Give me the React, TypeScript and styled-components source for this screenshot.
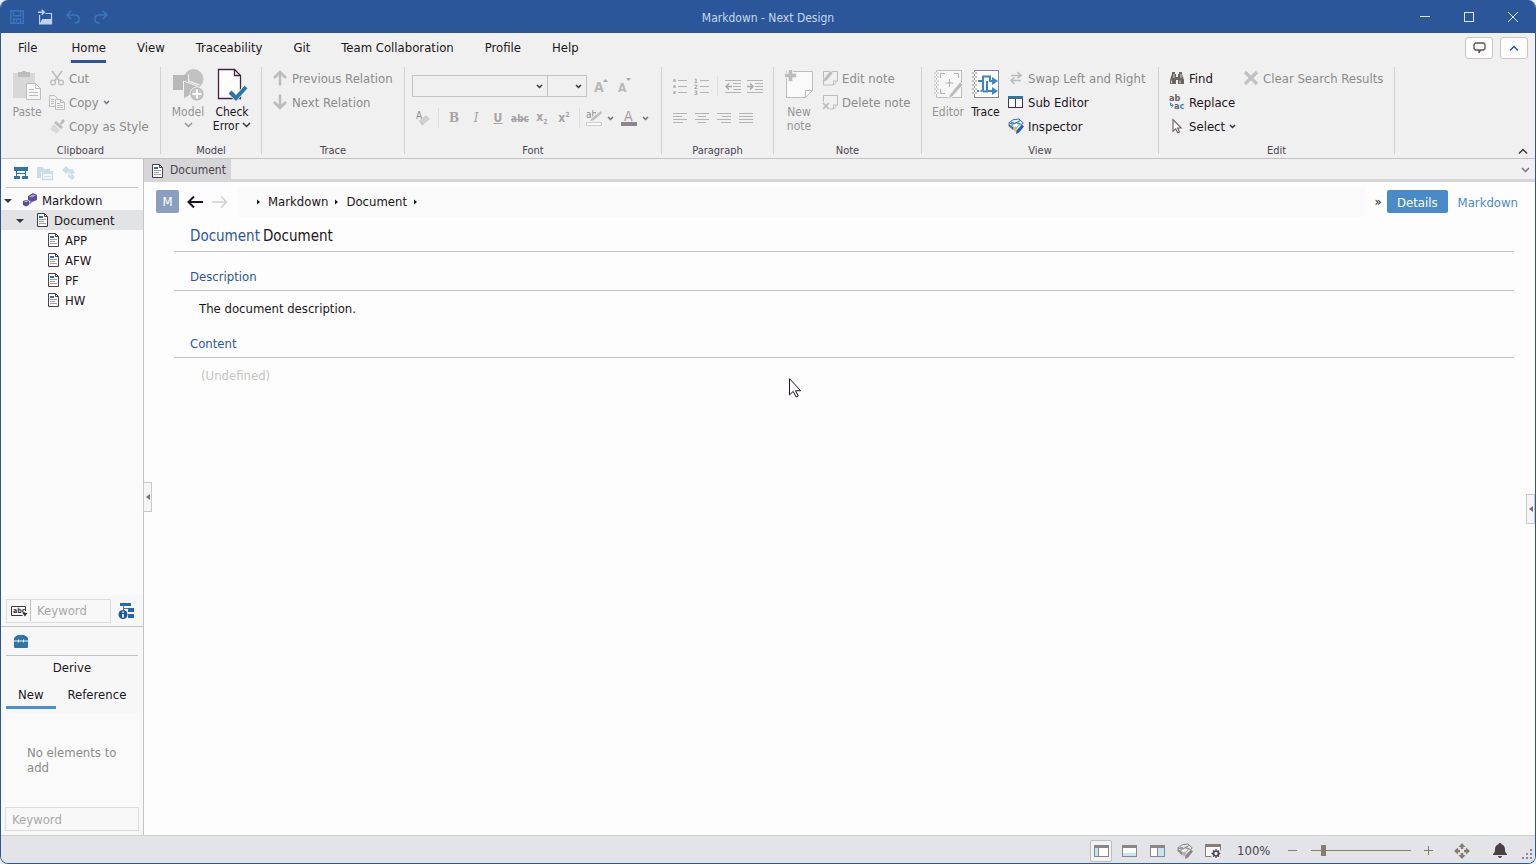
import React from 'react';
import styled, { createGlobalStyle } from 'styled-components';

const GlobalStyle = createGlobalStyle`
  * { box-sizing: border-box; }
  body { margin: 0; background: #eceef0; }
  body, button, input, select {
    font-family: "DejaVu Sans Condensed", "DejaVu Sans", "Noto Sans", sans-serif;
    font-size: 13px;
    line-height: 17px;
    color: #1c1420;
  }
  button { background: none; border: 0; padding: 0; white-space: nowrap; }
  svg { display: block; flex: none; overflow: visible; }
  h1, h2, p, ul { margin: 0; padding: 0; font-weight: 400; }
  ul { list-style: none; }
`;

const GREY = '#bcbcbc';
const BLUE = '#2b579a';
const INK = '#3b3340';

/* ---------- window frame ---------- */

const Window = styled.div`
  display: flex;
  flex-direction: column;
  min-height: 100vh;
  border: 1px solid ${BLUE};
  border-top: 0;
  border-radius: 8px;
  overflow: hidden;
  background: #f0f0f0;
`;

const TitleBar = styled.header`
  display: grid;
  grid-template-columns: 1fr auto 1fr;
  align-items: center;
  height: 33px;
  background: ${BLUE};
`;

const AppTitle = styled.h1`
  font-size: 12px;
  line-height: 16px;
  color: #c9d7ea;
  padding-top: 2px;
`;

const QuickAccess = styled.div`
  display: flex;
  gap: 12px;
  padding-left: 8px;
`;

const WindowButtons = styled.div`
  display: flex;
  justify-content: flex-end;
`;

const CaptionButton = styled.button`
  width: 44px;
  height: 32px;
  display: flex;
  align-items: center;
  justify-content: center;
`;

/* ---------- ribbon ---------- */

const MenuBar = styled.nav`
  display: flex;
  align-items: center;
  height: 30px;
  padding: 0 7px 0 17px;
`;

const MenuTab = styled.button<{ $active?: boolean }>`
  height: 30px;
  padding: 2px 0 0;
  margin-right: 31px;
  border-bottom: 3px solid ${p => (p.$active ? BLUE : 'transparent')};
`;

const FileTab = styled(MenuTab)`
  margin-right: 34px;
`;

const MenuSpacer = styled.div`
  flex: 1;
`;

const CornerButton = styled.button`
  width: 28px;
  height: 22px;
  margin-left: 7px;
  display: flex;
  align-items: center;
  justify-content: center;
  background: #fdfdfd;
  border: 1px solid #c6c6c6;
  border-radius: 3px;
`;

const Ribbon = styled.div`
  display: flex;
  height: 96px;
  padding-top: 3px;
  border-bottom: 1px solid #c3c3c3;
`;

const GroupBox = styled.section<{ $width: number }>`
  display: flex;
  flex-direction: column;
  width: ${p => p.$width}px;
`;

const GroupBody = styled.div<{ $pad: number }>`
  display: flex;
  height: 78px;
  padding-left: ${p => p.$pad}px;
`;

const GroupLabel = styled.h2`
  font-size: 11px;
  line-height: 14px;
  text-align: center;
  color: #4a4350;
`;

const Divider = styled.div`
  width: 1px;
  margin: 1px 0 4px;
  background: #d2d2d2;
`;

const RibbonEnd = styled.div`
  flex: 1;
  display: flex;
  justify-content: flex-end;
  align-items: flex-end;
  padding: 0 7px 3px 0;
`;

const Big = styled.button<{ $width: number }>`
  display: flex;
  flex-direction: column;
  align-items: center;
  width: ${p => p.$width}px;
  padding-top: 3px;
  font-size: 12px;
  line-height: 14px;
  color: #1c1420;
  &:disabled { color: #949494; }
  svg:first-child { margin-bottom: 4px; }
`;

const BigLine = styled.span`
  display: flex;
  align-items: center;
  justify-content: center;
  gap: 3px;
  height: 14px;
`;

const Stack = styled.div<{ $indent?: number }>`
  display: flex;
  flex-direction: column;
  margin-left: ${p => p.$indent ?? 0}px;
`;

const Small = styled.button`
  display: flex;
  align-items: center;
  gap: 4px;
  height: 24px;
  &:disabled { color: #8b8b8b; }
`;

const ToolRow = styled.div`
  display: flex;
  align-items: center;
  height: 22px;
  margin-bottom: 10px;
`;

const FontArea = styled.div`
  padding-top: 9px;
`;

const Tool = styled.button<{ $width?: number }>`
  width: ${p => p.$width ?? 22}px;
  height: 22px;
  display: flex;
  align-items: center;
  justify-content: center;
`;

const ToolPair = styled.div<{ $indent?: number }>`
  display: flex;
  gap: 2px;
  margin-left: ${p => p.$indent ?? 0}px;
`;

const ToolDivider = styled.div`
  width: 1px;
  height: 20px;
  margin: 0 4px;
  background: #dedede;
`;

const SelectBox = styled.label<{ $width: number }>`
  display: grid;
  align-items: center;
  width: ${p => p.$width}px;
  height: 22px;
  border: 1px solid #c3c3c3;
  & + & { border-left-width: 0; }
  select, svg { grid-area: 1 / 1; }
  svg { justify-self: end; margin-right: 4px; pointer-events: none; }
  select { appearance: none; border: 0; width: 100%; height: 20px; background: transparent; }
`;

/* ---------- work area ---------- */

const Work = styled.div`
  flex: 1;
  display: flex;
`;

const Sidebar = styled.aside`
  width: 143px;
  display: flex;
  flex-direction: column;
  background: #fafafa;
  border-right: 1px solid #c3c3c3;
`;

const PaneTools = styled.div`
  display: flex;
  align-items: center;
  gap: 8px;
  height: 29px;
  margin: 0 5px;
  padding-left: 7px;
  border-bottom: 1px solid #c3c3c3;
`;

const Tree = styled.ul`
  flex: 1;
  padding-top: 2px;
`;

const TreeRow = styled.li<{ $level: number; $selected?: boolean }>`
  display: flex;
  align-items: center;
  height: 20px;
  padding-left: ${p => [3, 15, 45][p.$level]}px;
  background: ${p => (p.$selected ? '#e2e3e5' : 'transparent')};
`;

const TreeIcon = styled.span<{ $nested?: boolean }>`
  display: flex;
  justify-content: center;
  width: 14px;
  margin: 0 5px 0 ${p => (p.$nested ? 0 : 10)}px;
`;

const SearchRow = styled.div`
  display: flex;
  align-items: center;
  gap: 7px;
  padding: 0 7px 0 5px;
  height: 32px;
  background: #f7f7f7;
  border-bottom: 1px solid #c3c3c3;
`;

const KeywordBox = styled.label`
  display: flex;
  align-items: center;
  flex: 1;
  min-width: 0;
  height: 24px;
  padding-left: 4px;
  border: 1px solid #dcdcdc;
  background: #f8f8f8;
`;

const KeywordInput = styled.input<{ $ruled?: boolean }>`
  flex: 1;
  min-width: 0;
  height: 21px;
  padding: 0 0 0 ${p => (p.$ruled ? 6 : 2)}px;
  border: 0;
  border-left: ${p => (p.$ruled ? '1px solid #c3c3c3' : '0')};
  background: transparent;
  &::placeholder { color: #a9a9a9; }
`;

const DerivePane = styled.section`
  display: flex;
  flex-direction: column;
  height: 208px;
  background: #f7f7f7;
`;

const DeriveTitle = styled.h2`
  font-size: 13px;
  line-height: 24px;
  text-align: center;
`;

const DeriveTabs = styled.div`
  display: flex;
  padding-left: 5px;
`;

const DeriveTab = styled.button<{ $active?: boolean }>`
  height: 29px;
  padding: 2px 12px 0;
  border-bottom: 3px solid ${p => (p.$active ? '#4a90d0' : 'transparent')};
`;

const DeriveEmpty = styled.p`
  flex: 1;
  display: flex;
  align-items: center;
  margin: 4px 4px 0;
  padding: 0 20px 0 22px;
  line-height: 15px;
  color: #8b8b8b;
  background: #fafafa;
`;

const DeriveSearch = styled.div`
  display: flex;
  padding: 0 4px 4px;
`;

const Main = styled.main`
  flex: 1;
  min-width: 0;
  display: flex;
  flex-direction: column;
  background: #fdfdfd;
`;

const DocTabs = styled.div`
  display: flex;
  align-items: stretch;
  justify-content: space-between;
  height: 23px;
  padding-right: 5px;
  background: #f0f0f0;
  border-bottom: 3px solid #d6d6d6;
`;

const DocTab = styled.button`
  display: flex;
  align-items: center;
  gap: 7px;
  height: 23px;
  padding: 0 5px 0 8px;
  font-size: 12px;
  color: #4a4350;
  background: #d6d6d8;
`;

const DocTabMenu = styled.button`
  display: flex;
  align-items: center;
`;

const PathRow = styled.div`
  display: flex;
  align-items: center;
  height: 40px;
  padding: 0 7px 1px 12px;
`;

const Badge = styled.span`
  width: 23px;
  height: 23px;
  margin-right: 3px;
  border-radius: 2px;
  line-height: 23px;
  text-align: center;
  color: #fff;
  background: #8a9fc0;
`;

const NavButton = styled.button`
  width: 25px;
  height: 24px;
  display: flex;
  align-items: center;
  justify-content: center;
`;

const Breadcrumb = styled.nav`
  flex: 1;
  display: flex;
  align-items: center;
  gap: 7px;
  height: 30px;
  margin-left: 6px;
  padding-left: 19px;
  border-radius: 4px;
  background: #fafafa;
`;

const Crumb = styled.a`
  color: #1c1420;
  text-decoration: none;
`;

const More = styled.button`
  width: 21px;
  height: 24px;
  padding-left: 3px;
`;

const ViewTab = styled.button<{ $active?: boolean }>`
  height: 23px;
  padding: 1px 10px 0;
  border-radius: 2px;
  color: ${p => (p.$active ? '#fff' : '#4a8ac8')};
  background: ${p => (p.$active ? '#4a8ac8' : 'transparent')};
`;

const Form = styled.article`
  padding: 0 21px 0 30px;
`;

const FormTitle = styled.h1`
  display: flex;
  gap: 3px;
  height: 30px;
  padding-left: 16px;
  font-size: 15px;
  line-height: 28px;
  border-bottom: 1px solid #c3c3c3;
`;

const FieldKind = styled.span`
  color: ${BLUE};
`;

const FieldLabel = styled.h2`
  height: 24px;
  padding-left: 16px;
  font-size: 13px;
  line-height: 20px;
  color: ${BLUE};
  border-bottom: 1px solid #c3c3c3;
`;

const Field = styled.section<{ $first?: boolean }>`
  padding-top: ${p => (p.$first ? 15 : 9)}px;
`;

const FieldText = styled.p<{ $muted?: boolean }>`
  height: 34px;
  padding-left: ${p => (p.$muted ? 27 : 25)}px;
  line-height: 36px;
  color: ${p => (p.$muted ? '#c4c4c0' : '#1c1420')};
`;

/* Collapse grips float over the pane borders. */
const Canvas = styled.div`
  position: relative;
  flex: 1;
  display: flex;
  flex-direction: column;
`;

const MainFrame = styled.div`
  position: relative;
  flex: 1;
  min-width: 0;
  display: flex;
`;

const Grip = styled.button<{ $side: 'left' | 'right' }>`
  position: absolute;
  top: calc(50% - 15px);
  ${p => p.$side}: ${p => (p.$side === 'left' ? -1 : 0)}px;
  width: 9px;
  height: 30px;
  display: flex;
  align-items: center;
  justify-content: center;
  background: #f5f5f5;
  border: 1px solid #c9c9c9;
`;

const Pointer = styled.svg`
  position: absolute;
  left: 645px;
  top: 196px;
  pointer-events: none;
`;

const StatusBar = styled.footer`
  display: flex;
  align-items: center;
  justify-content: flex-end;
  height: 28px;
  padding-top: 2px;
  border-top: 1px solid #d0d1d3;
  background: #e2e4e7;
`;

const StatusButton = styled.button<{ $width?: number }>`
  width: ${p => p.$width ?? 28}px;
  height: 24px;
  display: flex;
  align-items: center;
  justify-content: center;
`;

const ActiveFrame = styled.span`
  display: flex;
  align-items: center;
  justify-content: center;
  width: 22px;
  height: 22px;
  border: 1px solid #bdbdbd;
  border-radius: 2px;
  background: #f2f2f2;
`;

const Zoom = styled.output`
  width: 53px;
  padding-left: 10px;
  color: #4a4350;
`;

const ZoomSlider = styled.input`
  appearance: none;
  width: 100px;
  height: 16px;
  margin: 0 6px 0 7px;
  background: linear-gradient(#857c72, #857c72) center / 100% 1px no-repeat;
  &::-webkit-slider-thumb {
    appearance: none;
    width: 5px;
    height: 11px;
    background: #857c72;
  }
`;

const Corner = styled.span`
  display: flex;
  align-self: flex-end;
  padding: 0 3px 4px 6px;
`;

/* ---------- icons ---------- */

type IconProps = { w?: number; h?: number; crisp?: boolean; children: React.ReactNode };
const Icon = ({ w = 16, h = w, crisp, children }: IconProps) => (
  <svg width={w} height={h} viewBox={`0 0 ${w} ${h}`} fill="none" aria-hidden="true"
    shapeRendering={crisp ? 'crispEdges' : 'auto'}>{children}</svg>
);

const Chevron = ({ color = '#3b3340', w = 7, up = false }: { color?: string; w?: number; up?: boolean }) => (
  <Icon w={w} h={7}>
    <path d={up ? `M1 5.5l${w / 2 - 1} ${1 - w / 2} ${w / 2 - 1} ${w / 2 - 1}` : `M1 2l${w / 2 - 1} ${w / 2 - 1} ${w / 2 - 1} ${1 - w / 2}`}
      stroke={color} strokeWidth="1.5" />
  </Icon>
);

const Triangle = ({ right = false }: { right?: boolean }) => right
  ? <Icon w={4} h={8}><path d="M0 1.500L3 4 0 6.500z" fill="#1c1420" /></Icon>
  : <Icon w={9} h={6}><path d="M0 2h8L4 6z" fill={INK} /></Icon>;

const PageIcon = () => (
  <Icon w={11} h={14}>
    <path d="M.5.5h7l3 3v10H.5z" fill="#fdfdfd" stroke="#4a3f4c" />
    <path d="M7.5.5v3h3" stroke="#4a3f4c" />
    <path d="M2 3h4v2H2z" fill="#2f6db5" />
    <path d="M2 6.500h7M2 8.500h5M2 10.500h7" stroke="#a39ea5" />
  </Icon>
);

const SaveIcon = () => (
  <Icon w={16}>
    <path d="M1.75 1.75h12.5v12.5H1.75zM4.5 1.75v5h7v-5M4.5 14v-4h7v4M7.5 11v2" stroke="#3a75bb" strokeWidth="1.5" />
  </Icon>
);
const OpenIcon = () => (
  <Icon w={16}>
    <path d="M2.6 6v9h11.9V4.5H8.5" stroke="#bcd3ea" strokeWidth="1.2" />
    <path d="M2.5 15l2.8-5h9.2v5z" fill="#bcd3ea" />
    <path d="M1 3.2h6M4.6.8L7.4 3.2 4.6 5.8" stroke="#bcd3ea" strokeWidth="1.4" />
  </Icon>
);
const UndoIcon = ({ flip = false }: { flip?: boolean }) => (
  <Icon w={16}>
    <g transform={flip ? 'translate(16 0) scale(-1 1)' : undefined} stroke="#3a75bb" strokeWidth="1.7">
      <path d="M6 2L2 6l4 4M2.4 6h7.2c3 0 4.6 1.8 4.6 4s-1.6 3.8-4.6 4.2" />
    </g>
  </Icon>
);

const PasteIcon = () => (
  <Icon w={30} h={32}>
    <path d="M1 4h22v25H1z" fill="#d8d8d8" />
    <path d="M6 3h4a2.200 2.200 0 0 1 4 0h4v5H6z" fill={GREY} />
    <path d="M14.500 14.500h9l5 5v11h-14z" fill="#f7f7f7" stroke={GREY} />
    <path d="M23.500 14.500v5h5M17 20.500h5M17 23.500h9M17 26.500h9" stroke={GREY} />
  </Icon>
);
const CutIcon = () => (
  <Icon><path d="M3 1l7.500 10M13 1L5.500 11" stroke={GREY} strokeWidth="1.600" />
    <circle cx="4" cy="12.500" r="2.400" stroke={GREY} strokeWidth="1.300" /><circle cx="12" cy="12.500" r="2.400" stroke={GREY} strokeWidth="1.300" /></Icon>
);
const CopyIcon = () => (
  <Icon><path d="M.5 1.500h5l3 3v8h-8z" stroke={GREY} /><path d="M2 5.500h3M2 7.500h3M2 9.500h3" stroke={GREY} />
    <path d="M6.500 5.500h5l4 3v7h-9z" fill="#f5f5f5" stroke={GREY} /><path d="M11.500 5.500v3h4M8 9.500h3M8 11.500h6M8 13.500h6" stroke={GREY} /></Icon>
);
const BrushIcon = () => (
  <Icon><path d="M12 3l2-2 2 2-2 2z" fill={GREY} /><path d="M7 3l7 6-2 2-7-6z" fill={GREY} /><path d="M10.500 5.500L13 3l2 1-3 3z" fill={GREY} />
    <path d="M4.500 6l6.500 6-4 4L5 13l-1 1-1-2H1z" fill="#d8d8d8" /></Icon>
);
const ModelIcon = () => (
  <Icon w={32}>
    <circle cx="21.500" cy="10" r="10" fill="#c2c2c2" />
    <path d="M11.500 21V5.500L26 15 14 21z" fill="#c2c2c2" />
    <path d="M1 6h15v15H1z" fill="#b8b8b8" />
    <path d="M16.500 5.500V12l11 4" stroke="#f0f0f0" strokeWidth="1.200" />
    <path d="M11.500 30V12l14 5-7 9z" fill="#bcbcbc" stroke="#f0f0f0" />
    <circle cx="25" cy="25" r="7" fill="#c6c6c6" stroke="#f0f0f0" />
    <circle cx="25" cy="25" r="6" stroke="#b8b8b8" />
    <path d="M25 20.500v9M20.500 25h9" stroke="#fff" strokeWidth="2" />
  </Icon>
);
const CheckErrorIcon = () => (
  <Icon w={32}>
    <path d="M2.500.5h16l6 6v23h-22z" fill="#fdfdfd" stroke="#43243f" strokeWidth="1.300" />
    <path d="M18.500.5v6h6" stroke="#43243f" strokeWidth="1.300" />
    <path d="M14 23l6 6 10-11" stroke="#f0f0f0" strokeWidth="5.500" />
    <path d="M14 23l6 6 10-11" stroke="#2e75a8" strokeWidth="4" />
  </Icon>
);
const ArrowIcon = ({ down = false }: { down?: boolean }) => (
  <Icon><g transform={down ? 'rotate(180 8 8)' : undefined} stroke={GREY} strokeWidth="2.500"><path d="M8 15.500V2M2 8l6-6 6 6" /></g></Icon>
);
const NoteNewIcon = () => (
  <Icon w={30} h={32}>
    <path d="M2.500 2.500h26v19l-7 7h-19z" fill="#fafafa" stroke={GREY} /><path d="M28.500 21.500h-7v7z" fill="#fafafa" stroke={GREY} />
    <path d="M6 0v13M0 6.500h13" stroke="#f0f0f0" strokeWidth="6" /><path d="M6.500 1v11M1 6.500h11" stroke={GREY} strokeWidth="3.500" />
  </Icon>
);
const NoteEditIcon = ({ remove = false }: { remove?: boolean }) => (
  <Icon>
    <path d="M1.500 8V1.500h14V11l-4 4H8" stroke={GREY} /><path d="M15.500 11h-4v4" stroke={GREY} />
    {remove ? <path d="M1 9l6 6M7 9l-6 6" stroke={GREY} strokeWidth="1.700" />
      : <><path d="M1.500 8v7H8" stroke={GREY} /><path d="M3 10.500L10.500 2" stroke="#f0f0f0" strokeWidth="5" /><path d="M3 10L9.500 2" stroke={GREY} strokeWidth="3" /><path d="M.5 12.500l1-4 2.500 2z" fill={GREY} /></>}
  </Icon>
);
const EditorIcon = () => (
  <Icon w={30} h={32}>
    <path d="M3.500 1.500h25v27h-25z" fill="#f7f7f7" stroke={GREY} />
    <path d="M3.500 3v24" stroke={GREY} strokeWidth="4" strokeDasharray="2 2" />
    <path d="M3.500 3v24" stroke="#f7f7f7" strokeWidth="2" strokeDasharray="2 2" />
    <path d="M7.500 9V4.500H12M21 4.500h4.500V9M7.500 20v4.500H12M16.500 10v8M12.500 14h8" stroke="#b0b0b0" />
    <path d="M15 30l2-5L27 13l3 3-11 12z" fill={GREY} stroke="#f0f0f0" />
  </Icon>
);
const TraceIcon = () => (
  <Icon w={30} h={32}>
    <path d="M3.500 1.500h24v27h-24z" fill="#fdfdfd" stroke="#8c868c" />
    <path d="M3.500 3v24" stroke="#8c868c" strokeWidth="4" strokeDasharray="2 2" />
    <path d="M3.500 3v24" stroke="#fdfdfd" strokeWidth="2" strokeDasharray="2 2" />
    <path d="M7 12h5M12 22V7.500h7V12h4" stroke="#3d86c6" strokeWidth="2" />
    <path d="M6 22h7" stroke="#3d86c6" strokeWidth="2" strokeDasharray="2 1.500" />
    <path d="M12 22.500h4V12M16 22h8" stroke="#3d86c6" strokeWidth="2" />
    <path d="M21 8l6 4-6 4zM21 18l6 4-6 4z" fill="#3d86c6" />
  </Icon>
);
const SwapIcon = () => (
  <Icon><path d="M3 5.500h9M9.500 2l3.500 3.500L9.500 8" stroke={GREY} strokeWidth="1.600" /><path d="M13 10.500H4M6.500 7.500L3 10.500 6.500 14" stroke={GREY} strokeWidth="1.600" /></Icon>
);
const SubEditorIcon = () => (
  <Icon crisp><path d="M.5 2.500h14v11H.5z" fill="#fdfdfd" stroke="#4a2f4c" /><path d="M7.500 4v10" stroke="#4a2f4c" /><path d="M0 2h15v3H0z" fill="#2e75a8" /></Icon>
);
const InspectorIcon = ({ mono = false }: { mono?: boolean }) => {
  const c = mono ? '#8b8488' : '#2e75a8';
  return (
    <Icon>
      <path d="M.7 5L5 1.800l6-.8 4.300 4-2 1.500-4-2L5 6z" fill={mono ? '#ececec' : '#e6f0f8'} stroke={c} />
      <path d="M3 4l4 1.500L12 2.500" stroke={c} />
      <path d="M.5 5.500V8L5 12l1.500-1.500z" fill={c} />
      <path d="M3.500 7l4 4 4-4.500-3-1.500z" fill={mono ? '#f2f2f2' : '#fdfdfd'} stroke={c} strokeWidth=".7" />
      <path d="M5 10l3-1.500 1.500 1.500L7 14z" fill={mono ? '#b5b0b0' : '#e8b07a'} />
      <path d="M14 6.500l2 2-5 6-3 1.500.5-3.500z" fill={mono ? '#8b8488' : '#2060b0'} />
    </Icon>
  );
};
const FindIcon = () => (
  <Icon><path d="M3 2h3v2h1v3h2V4h1V2h3v2l2 6v4H9v-4H7v4H1v-4l2-6z" fill="#6b6460" /><path d="M2.500 10.500v3M11 10.500v3M5 4v4M12 4v4" stroke="#f0f0f0" strokeWidth=".8" /></Icon>
);
const ReplaceIcon = () => (
  <Icon>
    <text x="0" y="7" fontSize="9" fontWeight="600" fill="#6b5f66">ab</text>
    <text x="5" y="15" fontSize="9" fontWeight="600" fill="#6b5f66">a<tspan fill="#3d86c6">c</tspan></text>
    <path d="M1.500 8.500v3h2.500M2.500 9.500l1.500 2-1.500 2" stroke="#3d86c6" />
  </Icon>
);
const CursorIcon = () => (
  <Icon><path d="M4 1.500v11.700l2.700-2.400 2 4 1.800-.9-2-3.900h3.700z" fill="#fdfdfd" stroke="#6b5f66" strokeWidth="1.100" /></Icon>
);
const ClearIcon = () => <Icon><path d="M2 2l12 12M14 2L2 14" stroke="#c2c2c2" strokeWidth="3.200" /></Icon>;

const LinesIcon = ({ lines }: { lines: [number, number][] }) => (
  <Icon crisp>{lines.map(([a, b], i) => <path key={i} d={`M${a} ${3.5 + i * 3}H${b}`} stroke="#b4b4b4" />)}</Icon>
);
const ListIcon = ({ numbers = false }: { numbers?: boolean }) => (
  <Icon w={16}>
    <path d="M6 2.500h9M6 8.500h9M6 14.500h9" stroke="#b4b4b4" />
    {[2.5, 8.5, 14.5].map((y, i) => numbers
      ? <text key={y} x="0" y={y + 2} fontSize="6" fontWeight="700" fill="#a5a5a5">{i + 1}</text>
      : <circle key={y} cx="2.500" cy={y} r="1.500" fill="#b4b4b4" />)}
  </Icon>
);
const IndentIcon = ({ out = false }: { out?: boolean }) => (
  <Icon><path d="M0 2.500h16M8 5.500h8M8 8.500h8M8 11.500h8M0 14.500h16" stroke="#b4b4b4" />
    <path d={out ? 'M1 8.500h6M4 5.500l-3 3 3 3' : 'M0 8.500h6M3 5.500l3 3-3 3'} stroke="#a8a8a8" strokeWidth="1.400" /></Icon>
);

const Glyph = styled.span<{ $italic?: boolean; $bold?: boolean; $line?: string; $serif?: boolean; $size?: number }>`
  font-family: ${p => (p.$serif ? '"DejaVu Serif", serif' : 'inherit')};
  font-style: ${p => (p.$italic ? 'italic' : 'normal')};
  font-weight: ${p => (p.$bold ? 700 : 400)};
  font-size: ${p => p.$size ?? 12}px;
  text-decoration: ${p => p.$line ?? 'none'};
  color: #aaa2a8;
  sub, sup { font-size: 7px; line-height: 7px; }
`;

const FontSizeIcon = ({ down = false }: { down?: boolean }) => (
  <Icon><text x={down ? 2 : 1} y="14" fontSize={down ? 12 : 14} fontWeight="600" fill="#b8b8b8">A</text>
    <path d={down ? 'M10 0h5l-2.500 3z' : 'M10 4h5l-2.500-3z'} fill="#a8a8a8" /></Icon>
);
const EraseIcon = () => (
  <Icon><text x="1" y="9" fontSize="10" fill="#8f8a8f">A</text><path d="M5 10l6-5 4 4-6 5z" fill="#cfcfcf" /><path d="M4 11l1-1 4 4-1.500 1.500z" fill="#c4c4c4" /></Icon>
);
const HighlightIcon = () => (
  <Icon w={18} h={18}><text x="1" y="9" fontSize="10" fill="#8f888f">ab</text><path d="M6 12L16 3" stroke="#f0f0f0" strokeWidth="5" /><path d="M5 12l2-3 9-7 1 2-8 7z" fill="#bdbdbd" /><path d="M1.500 13.500h15v3h-15z" fill="#fafafa" stroke="#cdcdcd" /></Icon>
);
const FontColorIcon = () => (
  <Icon w={18} h={18}><text x="4" y="12" fontSize="14" fill="#a09aa0">A</text><path d="M1 13h16v4H1z" fill="#8d858d" /></Icon>
);

const TreeToolIcon = () => (
  <Icon crisp><path d="M1 2h14v4H1zM1 11h6v3H1zM9 11h6v3H9z" fill="#2e75a8" /><path d="M3.500 6v5M12.500 6v5M4 8.500h9" stroke="#2e75a8" /></Icon>
);
const PanesIcon = () => (
  <Icon><path d="M0 2h6l1 2h6v3H4v6H0z" fill="#cadde9" /><path d="M5.500 6.500h10v8h-10z" fill="#f4f8fb" stroke="#cadde9" strokeWidth="1.300" /><path d="M5 6h11v3H5z" fill="#cadde9" /><path d="M7 11.500h7" stroke="#cadde9" /></Icon>
);
const LinkNodesIcon = () => (
  <Icon><path d="M5 1l4 4-4 4-4-4z" fill="#cadde9" /><path d="M6 5h6M8 6v6h4" stroke="#cadde9" strokeWidth="1.300" /><path d="M11 4l3 3-3 3-3-3zM11 9l3 3-3 3-3-3z" fill="#cadde9" /></Icon>
);
const ProjectIcon = () => (
  <Icon w={14} h={14}><path d="M5 3l5-3 4 2v5L9 9 5 7z" fill="#5b4e94" /><path d="M6 3.500l4-2 3 1-4 2z" fill="#a79fd0" />
    <path d="M0 8l3-1 3 1v4l-3 1.500L0 12z" fill="#5b4e94" /><path d="M1 8.500l2-.8 2 .8-2 .8z" fill="#c9c3e4" /><path d="M5 10h3V8" stroke="#5b4e94" /></Icon>
);
const AbcIcon = () => (
  <Icon w={19} h={14}><path d="M14.500 7V2.500H.5v9h11" stroke={INK} /><text x="2" y="9" fontSize="7" fontWeight="700" fill={INK}>abc</text><path d="M11.500 9h5L14 12.500z" fill={INK} /></Icon>
);
const InfoTreeIcon = () => (
  <Icon w={18} h={18}><path d="M2 1h11v3H2zM10 6h6v4h-6zM10 12h6v4h-6z" fill="#2468b4" /><path d="M5.500 4v4M5 6.500h5" stroke="#6b7684" />
    <circle cx="5" cy="12.500" r="4.500" fill="#1c57a5" /><path d="M5 12v3.500M5 9.500v1.300" stroke="#fff" strokeWidth="1.800" /></Icon>
);
const ToolboxIcon = () => (
  <Icon w={16}><path d="M4.500 3.500V2.500h7v1" stroke="#2e75a8" /><path d="M3 3h10l2 2v2.500H1V5zM1 8.500h14V14a1 1 0 0 1-1 1H2a1 1 0 0 1-1-1z" fill="#2e75a8" /><path d="M5.500 6.500v3M10.500 6.500v3" stroke="#eaf2f8" /></Icon>
);

const LayoutIcon = ({ pane }: { pane: 'left' | 'bottom' | 'right' }) => (
  <Icon w={15} h={14} crisp>
    <path d="M.5 1.500h14v11H.5z" fill="#fdfdfd" stroke="#8b8488" />
    {pane === 'left' && <path d="M1 4h3v8H1z" fill="#c4e6f2" />}
    {pane === 'left' && <path d="M4.500 3v9" stroke="#8b8488" />}
    {pane === 'bottom' && <path d="M1 9h13v3H1z" fill="#c4e6f2" />}
    {pane === 'right' && <path d="M8 4h6v8H8z" fill="#c4e6f2" />}
    {pane === 'right' && <path d="M7.500 3v9" stroke="#8b8488" />}
    <path d="M0 1h15v3H0z" fill="#8b8488" />
  </Icon>
);
const WindowGearIcon = () => (
  <Icon w={17} h={16}><path d="M.5 1.500h15v12H.5z" fill="#f7f7f7" stroke="#857c72" /><path d="M0 1h16v3H0z" fill="#857c72" />
    <circle cx="11" cy="10.500" r="5.500" fill="#f0f0f0" /><circle cx="11" cy="10.500" r="2.500" stroke="#4a4350" strokeWidth="1.700" />
    <path d="M11 6v1.500M11 13.500V15M6.500 10.500H8M14 10.500h1.500M8 7.500l1 1M14 7.500l-1 1M8 13.500l1-1M14 13.500l-1-1" stroke="#4a4350" strokeWidth="1.300" /></Icon>
);
const FitIcon = () => (
  <Icon w={16}><path d="M8 0l3.500 4h-7zM8 16l3.500-4h-7zM0 8l4-3.500v7zM16 8l-4-3.500v7z" fill="#857c72" /><path d="M8 4v2M8 10v2M4 8h2M10 8h2" stroke="#857c72" strokeWidth="2.500" /></Icon>
);
const BellIcon = () => (
  <Icon w={14} h={15}><path d="M7 0c1 0 1.500.6 1.500 1.300C11 2 12 4 12 6.500c0 2.500.5 3.500 2 4.500v1H0v-1c1.500-1 2-2 2-4.500C2 4 3 2 5.500 1.300 5.500.6 6 0 7 0zM5 13h4c-.3 1.200-1 2-2 2s-1.700-.8-2-2z" fill="#4a3f45" /></Icon>
);
const SizeGripIcon = () => (
  <Icon w={10} h={10} crisp><path d="M8 0h2v2H8zM8 4h2v2H8zM8 8h2v2H8zM4 4h2v2H4zM4 8h2v2H4zM0 8h2v2H0z" fill="#8d84a0" /></Icon>
);
const BackIcon = ({ forward = false }: { forward?: boolean }) => (
  <Icon w={16} h={14}><g transform={forward ? 'translate(16 0) scale(-1 1)' : undefined}>
    <path d="M1 7h15M7 1.500L1.500 7 7 12.500" stroke={forward ? '#d0d0d0' : '#1c1420'} strokeWidth={forward ? 1.5 : 2} /></g></Icon>
);
const GripArrow = () => <Icon w={4} h={8}><path d="M4 1v6L0 4z" fill="#77707a" /></Icon>;

/* ---------- page ---------- */

const Group = ({ label, width, pad, children }: { label: string; width: number; pad: number; children: React.ReactNode }) => (
  <>
    <GroupBox $width={width} aria-label={label}>
      <GroupBody $pad={pad}>{children}</GroupBody>
      <GroupLabel>{label}</GroupLabel>
    </GroupBox>
    <Divider />
  </>
);

const menus = ['Home', 'View', 'Traceability', 'Git', 'Team Collaboration', 'Profile', 'Help'];

export default function App() {
  return (
    <>
      <GlobalStyle />
      <Window>
        <TitleBar>
          <QuickAccess>
            <button aria-label="Save"><SaveIcon /></button>
            <button aria-label="Open"><OpenIcon /></button>
            <button aria-label="Undo"><UndoIcon /></button>
            <button aria-label="Redo"><UndoIcon flip /></button>
          </QuickAccess>
          <AppTitle>Markdown - Next Design</AppTitle>
          <WindowButtons>
            <CaptionButton aria-label="Minimize"><Icon w={10} h={11} crisp><path d="M0 5.500h10" stroke="#dfe8f3" /></Icon></CaptionButton>
            <CaptionButton aria-label="Maximize"><Icon w={10} crisp><path d="M.5.5h9v9h-9z" stroke="#dfe8f3" /></Icon></CaptionButton>
            <CaptionButton aria-label="Close"><Icon w={10}><path d="M0 0l10 10M10 0L0 10" stroke="#dfe8f3" /></Icon></CaptionButton>
          </WindowButtons>
        </TitleBar>

        <MenuBar>
          <FileTab>File</FileTab>
          {menus.map(m => <MenuTab key={m} $active={m === 'Home'}>{m}</MenuTab>)}
          <MenuSpacer />
          <CornerButton aria-label="Feedback">
            <Icon w={13} h={12}><path d="M2.500 1h8l1.500 1.500v4L10.500 8H7.500L6 11V8H2.500L1 6.500v-4z" stroke="#5a4f58" strokeWidth="1.300" /></Icon>
          </CornerButton>
          <CornerButton aria-label="Collapse ribbon"><Chevron up w={10} color={BLUE} /></CornerButton>
        </MenuBar>

        <Ribbon>
          <Group label="Clipboard" width={159} pad={9}>
            <Big $width={34} disabled><PasteIcon /><BigLine>Paste</BigLine></Big>
            <Stack $indent={5}>
              <Small disabled><CutIcon />Cut</Small>
              <Small disabled><CopyIcon />Copy <Chevron color="#77707a" /></Small>
              <Small disabled><BrushIcon />Copy as Style</Small>
            </Stack>
          </Group>
          <Group label="Model" width={100} pad={5}>
            <Big $width={44} disabled><ModelIcon /><BigLine>Model</BigLine><BigLine><Chevron color="#949494" w={9} /></BigLine></Big>
            <Big $width={44}><CheckErrorIcon /><BigLine>Check</BigLine><BigLine>Error <Chevron w={9} /></BigLine></Big>
          </Group>
          <Group label="Trace" width={142} pad={10}>
            <Stack>
              <Small disabled><ArrowIcon />Previous Relation</Small>
              <Small disabled><ArrowIcon down />Next Relation</Small>
            </Stack>
          </Group>
          <Group label="Font" width={256} pad={7}>
            <FontArea>
              <ToolRow>
                <SelectBox $width={136}><select aria-label="Font family" disabled /><Chevron /></SelectBox>
                <SelectBox $width={39}><select aria-label="Font size" disabled /><Chevron /></SelectBox>
                <ToolPair $indent={4}>
                  <Tool $width={20} aria-label="Increase font size"><FontSizeIcon /></Tool>
                  <Tool aria-label="Decrease font size"><FontSizeIcon down /></Tool>
                </ToolPair>
              </ToolRow>
              <ToolRow>
                <Tool aria-label="Clear formatting"><EraseIcon /></Tool>
                <ToolDivider />
                <Tool><Glyph $bold $serif>B</Glyph></Tool>
                <Tool><Glyph $italic $serif>I</Glyph></Tool>
                <Tool><Glyph $line="underline" $bold>U</Glyph></Tool>
                <Tool><Glyph $line="line-through" $size={10} $bold>abc</Glyph></Tool>
                <Tool><Glyph $bold>x<sub>2</sub></Glyph></Tool>
                <Tool><Glyph $bold>x<sup>2</sup></Glyph></Tool>
                <ToolDivider />
                <ToolPair>
                  <Tool $width={20} aria-label="Highlight colour"><HighlightIcon /></Tool>
                  <Tool $width={8} aria-label="Highlight menu"><Chevron color="#77707a" /></Tool>
                </ToolPair>
                <ToolPair $indent={5}>
                  <Tool $width={20} aria-label="Font colour"><FontColorIcon /></Tool>
                  <Tool $width={8} aria-label="Font colour menu"><Chevron color="#77707a" /></Tool>
                </ToolPair>
              </ToolRow>
            </FontArea>
          </Group>
          <Group label="Paragraph" width={111} pad={7}>
            <FontArea>
              <ToolRow>
                <Tool aria-label="Bullets"><ListIcon /></Tool>
                <Tool aria-label="Numbering"><ListIcon numbers /></Tool>
                <ToolDivider />
                <Tool aria-label="Decrease indent"><IndentIcon out /></Tool>
                <Tool aria-label="Increase indent"><IndentIcon /></Tool>
              </ToolRow>
              <ToolRow>
                <Tool aria-label="Align left"><LinesIcon lines={[[1, 15], [1, 10], [1, 15], [1, 11]]} /></Tool>
                <Tool aria-label="Align centre"><LinesIcon lines={[[1, 15], [4, 12], [1, 15], [4, 12]]} /></Tool>
                <Tool aria-label="Align right"><LinesIcon lines={[[1, 15], [6, 15], [1, 15], [5, 15]]} /></Tool>
                <Tool aria-label="Justify"><LinesIcon lines={[[1, 15], [1, 15], [1, 15], [1, 15]]} /></Tool>
              </ToolRow>
            </FontArea>
          </Group>
          <Group label="Note" width={147} pad={5}>
            <Big $width={40} disabled><NoteNewIcon /><BigLine>New</BigLine><BigLine>note</BigLine></Big>
            <Stack $indent={3}>
              <Small disabled><NoteEditIcon />Edit note</Small>
              <Small disabled><NoteEditIcon remove />Delete note</Small>
            </Stack>
          </Group>
          <Group label="View" width={236} pad={7}>
            <Big $width={38} disabled><EditorIcon /><BigLine>Editor</BigLine></Big>
            <Big $width={37}><TraceIcon /><BigLine>Trace</BigLine></Big>
            <Stack $indent={4}>
              <Small disabled><SwapIcon />Swap Left and Right</Small>
              <Small><SubEditorIcon />Sub Editor</Small>
              <Small><InspectorIcon />Inspector</Small>
            </Stack>
          </Group>
          <Group label="Edit" width={235} pad={10}>
            <Stack>
              <Small><FindIcon />Find</Small>
              <Small><ReplaceIcon />Replace</Small>
              <Small><CursorIcon />Select <Chevron /></Small>
            </Stack>
            <Stack $indent={7}>
              <Small disabled><ClearIcon />Clear Search Results</Small>
            </Stack>
          </Group>
          <RibbonEnd><button aria-label="Hide ribbon"><Chevron up w={10} /></button></RibbonEnd>
        </Ribbon>

        <Work>
          <Sidebar>
            <PaneTools>
              <button aria-label="Model tree"><TreeToolIcon /></button>
              <button aria-label="Panes"><PanesIcon /></button>
              <button aria-label="Relations"><LinkNodesIcon /></button>
            </PaneTools>
            <Tree>
              <TreeRow $level={0}><Triangle /><TreeIcon><ProjectIcon /></TreeIcon>Markdown</TreeRow>
              <TreeRow $level={1} $selected><Triangle /><TreeIcon><PageIcon /></TreeIcon>Document</TreeRow>
              {['APP', 'AFW', 'PF', 'HW'].map(n => <TreeRow key={n} $level={2}><TreeIcon $nested><PageIcon /></TreeIcon>{n}</TreeRow>)}
            </Tree>
            <SearchRow>
              <KeywordBox><AbcIcon /><KeywordInput $ruled placeholder="Keyword" aria-label="Tree keyword" /></KeywordBox>
              <button aria-label="Tree information"><InfoTreeIcon /></button>
            </SearchRow>
            <DerivePane>
              <PaneTools><button aria-label="Toolbox"><ToolboxIcon /></button></PaneTools>
              <DeriveTitle>Derive</DeriveTitle>
              <DeriveTabs>
                <DeriveTab $active>New</DeriveTab>
                <DeriveTab>Reference</DeriveTab>
              </DeriveTabs>
              <DeriveEmpty>No elements to add</DeriveEmpty>
              <DeriveSearch><KeywordBox><KeywordInput placeholder="Keyword" aria-label="Element keyword" /></KeywordBox></DeriveSearch>
            </DerivePane>
          </Sidebar>

          <MainFrame>
            <Main>
              <DocTabs>
                <DocTab><PageIcon />Document</DocTab>
                <DocTabMenu aria-label="Tab list"><Chevron color="#77707a" w={9} /></DocTabMenu>
              </DocTabs>
              <Canvas>
                <PathRow>
                  <Badge>M</Badge>
                  <NavButton aria-label="Back"><BackIcon /></NavButton>
                  <NavButton aria-label="Forward"><BackIcon forward /></NavButton>
                  <Breadcrumb aria-label="Path">
                    <Triangle right /><Crumb href="#markdown">Markdown</Crumb>
                    <Triangle right /><Crumb href="#document">Document</Crumb>
                    <Triangle right />
                  </Breadcrumb>
                  <More>»</More>
                  <ViewTab $active>Details</ViewTab>
                  <ViewTab>Markdown</ViewTab>
                </PathRow>
                <Form>
                  <FormTitle><FieldKind>Document</FieldKind>Document</FormTitle>
                  <Field $first>
                    <FieldLabel>Description</FieldLabel>
                    <FieldText>The document description.</FieldText>
                  </Field>
                  <Field>
                    <FieldLabel>Content</FieldLabel>
                    <FieldText $muted>(Undefined)</FieldText>
                  </Field>
                </Form>
                <Grip $side="right" aria-label="Expand right pane"><GripArrow /></Grip>
                <Pointer width="13" height="20" viewBox="0 0 13 20" aria-hidden="true">
                  <path d="M.5.7v16.200l3.700-3.500 2.900 5.600 2.200-1-2.800-5.300h5.200z" fill="#fff" stroke="#1c1420" />
                </Pointer>
              </Canvas>
            </Main>
            <Grip $side="left" aria-label="Collapse left pane"><GripArrow /></Grip>
          </MainFrame>
        </Work>

        <StatusBar>
          <StatusButton aria-label="Left pane"><ActiveFrame><LayoutIcon pane="left" /></ActiveFrame></StatusButton>
          <StatusButton aria-label="Bottom pane"><LayoutIcon pane="bottom" /></StatusButton>
          <StatusButton aria-label="Right pane"><LayoutIcon pane="right" /></StatusButton>
          <StatusButton aria-label="Inspector pane"><InspectorIcon mono /></StatusButton>
          <StatusButton aria-label="Window settings"><WindowGearIcon /></StatusButton>
          <Zoom>100%</Zoom>
          <StatusButton $width={24} aria-label="Zoom out"><Icon w={9} h={9} crisp><path d="M0 4.500h9" stroke="#857c72" /></Icon></StatusButton>
          <ZoomSlider type="range" min={0} max={100} defaultValue={10} aria-label="Zoom" />
          <StatusButton $width={22} aria-label="Zoom in"><Icon w={9} h={9} crisp><path d="M0 4.500h9M4.500 0v9" stroke="#857c72" /></Icon></StatusButton>
          <StatusButton $width={45} aria-label="Fit"><FitIcon /></StatusButton>
          <StatusButton $width={32} aria-label="Notifications"><BellIcon /></StatusButton>
          <Corner><SizeGripIcon /></Corner>
        </StatusBar>
      </Window>
    </>
  );
}
